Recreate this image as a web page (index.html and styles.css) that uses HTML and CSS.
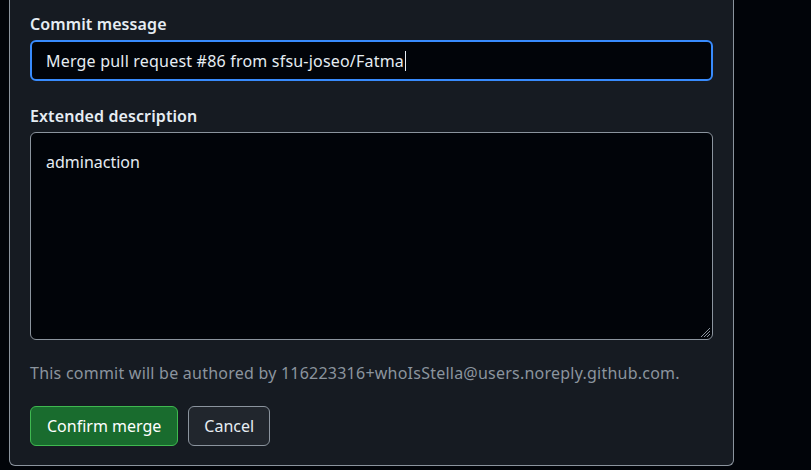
FILE: index.html
```html
<!DOCTYPE html>
<html lang="en">
<head>
<meta charset="utf-8">
<title>Merge</title>
<link rel="stylesheet" href="styles.css">
</head>
<body>
<div class="panel">
  <div class="field">
    <div class="label">Commit message</div>
    <div class="input">Merge pull request #86 from sfsu-joseo/Fatma<span class="caret"></span></div>
  </div>
  <div class="field field-desc">
    <div class="label">Extended description</div>
    <div class="textarea">adminaction
      <svg class="grip" width="12" height="12" viewBox="0 0 12 12"><path d="M11 2 L2 11 M11 5 L5 11 M11 8 L8 11" stroke="#8b949e" stroke-width="1"/></svg>
    </div>
  </div>
  <p class="note">This commit will be authored by 116223316+whoIsStella@users.noreply.github.com.</p>
  <div class="actions">
    <button class="btn btn-primary">Confirm merge</button>
    <button class="btn">Cancel</button>
  </div>
</div>
</body>
</html>
```
FILE: styles.css
```css
html, body {
  margin: 0;
  padding: 0;
  background: #010409;
  font-family: "Noto Sans", "Open Sans", sans-serif;
  color: #e6edf3;
}
.panel {
  margin-left: 9px;
  width: 683px;
  padding: 12px 20px 19px 20px;
  background: #161b22;
  border: 1px solid #8b949e;
  border-top: none;
  border-radius: 0 0 6px 6px;
  display: flex;
  flex-direction: column;
}
.label {
  font-size: 16px;
  font-weight: 600;
  line-height: 24px;
  margin-bottom: 4px;
  letter-spacing: 0.1px;
}
.input {
  height: 37px;
  border: 2px solid #388bfd;
  border-radius: 6px;
  background: #010409;
  padding: 0 14px;
  font-size: 16px;
  line-height: 39px;
  letter-spacing: 0.2px;
  white-space: nowrap;
}
.caret {
  display: inline-block;
  width: 1px;
  height: 20px;
  background: #e6edf3;
  vertical-align: -4px;
  margin-left: 1px;
}
.field-desc {
  margin-top: 23px;
}
.textarea {
  position: relative;
  height: 181px;
  border: 1px solid #8b949e;
  border-radius: 6px;
  background: #010409;
  padding: 17px 15px 8px 15px;
  font-size: 16px;
  line-height: 24px;
}
.grip {
  position: absolute;
  right: 1px;
  bottom: 1px;
}
.note {
  margin: 21px 0 0 0;
  font-size: 16px;
  line-height: 24px;
  letter-spacing: 0.23px;
  color: #8b949e;
}
.actions {
  display: flex;
  gap: 10px;
  margin-top: 21px;
}
.btn {
  height: 40px;
  padding: 0 15px;
  border-radius: 6px;
  border: 1px solid #8b949e;
  background: #21262d;
  color: #e6edf3;
  font-family: inherit;
  font-size: 16px;
  line-height: 38px;
}
.btn-primary {
  background: #196c2e;
  border-color: #3fb950;
  color: #ffffff;
  padding: 0 16px;
}
```
